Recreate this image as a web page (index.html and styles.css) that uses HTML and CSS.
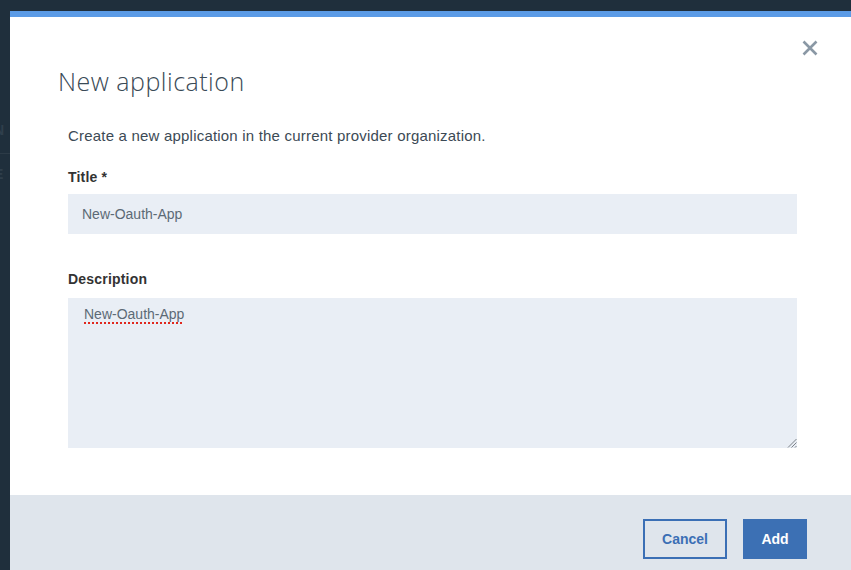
FILE: index.html
```html
<!DOCTYPE html>
<html lang="en">
<head>
<meta charset="utf-8">
<title>New application</title>
<link rel="stylesheet" href="styles.css">
</head>
<body>
<div class="page">
  <aside class="backdrop">
    <span class="ghost ghost-1"></span>
    <span class="ghost-line"></span>
    <span class="ghost ghost-2"></span>
  </aside>
  <div class="modal">
    <div class="modal-main">
      <header class="modal-header">
        <h1 class="modal-title">New application</h1>
        <button class="close" aria-label="Close">
          <svg width="16" height="16" viewBox="0 0 16 16"><path d="M1.5 1.5 L14.5 14.5 M14.5 1.5 L1.5 14.5" stroke="#8a98a5" stroke-width="2.6" stroke-linecap="butt" fill="none"/></svg>
        </button>
      </header>
      <div class="modal-body">
        <p class="intro">Create a new application in the current provider organization.</p>
        <label class="label">Title *</label>
        <div class="input">New-Oauth-App</div>
        <label class="label label-desc">Description</label>
        <div class="textarea">
          <span class="spell">New-Oauth-App</span>
          <svg class="grip" width="10" height="10" viewBox="0 0 10 10"><path d="M9.5 1 L1 9.5 M9.5 4.5 L4.5 9.5 M9.5 8 L8 9.5" stroke="#7d8288" stroke-width="1" fill="none"/></svg>
        </div>
      </div>
    </div>
    <footer class="modal-footer">
      <button class="btn btn-secondary">Cancel</button>
      <button class="btn btn-primary">Add</button>
    </footer>
  </div>
</div>
</body>
</html>
```
FILE: styles.css
```css
* { box-sizing: border-box; }
html, body { margin: 0; padding: 0; }
body {
  background: #1f2f3c;
  font-family: "Liberation Sans", Arial, sans-serif;
  width: 851px;
  height: 570px;
  overflow: hidden;
}
.page {
  display: flex;
  height: 570px;
  padding-top: 11px;
}
.backdrop {
  width: 10px;
  flex: none;
  position: relative;
  overflow: hidden;
}
.ghost {
  position: absolute;
  left: -6px;
  font-size: 14px;
  color: #2f3f4c;
  font-weight: bold;
}
.ghost-1 { top: 111px; }
.ghost-2 { top: 155px; }
.ghost-1::before { content: "N"; }
.ghost-2::before { content: "E"; }
.ghost-line {
  position: absolute;
  left: 0;
  top: 142px;
  width: 10px;
  height: 1px;
  background: #2c3b47;
}
.modal {
  flex: 1;
  background: #fff;
  border-top: 6px solid #5b9be6;
  display: flex;
  flex-direction: column;
}
.modal-main { flex: 1; }
.modal-header {
  display: flex;
  justify-content: space-between;
  align-items: flex-start;
  padding: 0 33px 0 48px;
}
.modal-title {
  margin: 49px 0 0;
  font-family: "Open Sans", sans-serif;
  font-weight: 300;
  font-size: 25px;
  line-height: 30px;
  color: #3a4a56;
  letter-spacing: 0.5px;
}
.close {
  margin-top: 23px;
  background: none;
  border: 0;
  padding: 0;
  width: 16px;
  height: 16px;
  display: flex;
}
.modal-body {
  padding: 0 54px 0 58px;
  display: flex;
  flex-direction: column;
}
.intro {
  margin: 30px 0 0;
  font-size: 15px;
  line-height: 20px;
  color: #3c4a55;
  letter-spacing: 0.2px;
}
.label {
  margin-top: 22px;
  font-size: 14px;
  font-weight: bold;
  line-height: 18px;
  color: #333;
  letter-spacing: 0.2px;
}
.label-desc { margin-top: 36px; }
.input {
  margin-top: 8px;
  height: 40px;
  background: #e9eef5;
  padding: 0 14px;
  display: flex;
  align-items: center;
  font-size: 14px;
  color: #5c6a75;
}
.textarea {
  margin-top: 10px;
  height: 150px;
  background: #e9eef5;
  padding: 7px 16px;
  position: relative;
  font-size: 14px;
  line-height: 18px;
  color: #5c6a75;
}
.spell {
  text-decoration: underline dotted #e0271d;
  text-decoration-thickness: 2px;
  text-underline-offset: 3px;
}
.grip {
  position: absolute;
  right: 0;
  bottom: 0;
}
.modal-footer {
  height: 75px;
  background: #dfe5ec;
  display: flex;
  justify-content: flex-end;
  align-items: flex-start;
  gap: 16px;
  padding: 24px 44px 0 0;
}
.btn {
  height: 40px;
  font-family: "Liberation Sans", Arial, sans-serif;
  font-size: 14px;
  font-weight: bold;
  padding: 0;
  cursor: pointer;
}
.btn-secondary {
  width: 84px;
  background: transparent;
  border: 2px solid #3b6fb5;
  color: #3b6fb5;
}
.btn-primary {
  width: 64px;
  background: #3c70b4;
  border: 0;
  color: #fff;
}
```
